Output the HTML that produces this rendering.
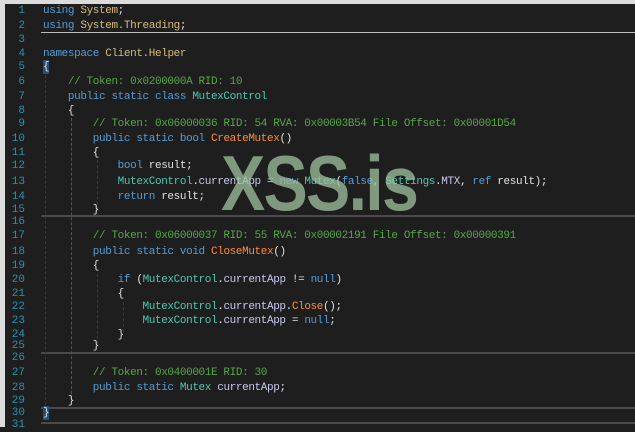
<!DOCTYPE html><html><head><style>
body{margin:0;width:635px;height:427px;overflow:hidden;background:#1e1e1e;position:relative;font-family:"Liberation Mono",monospace;font-size:11px;letter-spacing:-0.38px}
.l{position:absolute;left:0;height:14px;line-height:14px;white-space:pre;color:#e0e0e0}
.n{position:absolute;left:0;width:25px;text-align:right;color:#2b91af;letter-spacing:0}
.c{position:absolute;left:43px}
.k{color:#569cd6}.t{color:#4ec9b0}.y{color:#d7ba7d}.m{color:#ff8b3d}.g{color:#57a64a}.f{color:#c8c8f0}
.sep{position:absolute;left:41px;right:0;height:2px;background:#4a4a4a}
.wm{position:absolute;left:221px;top:138px;font-family:"Liberation Sans",sans-serif;font-weight:bold;font-size:78px;color:rgba(160,195,160,0.75);letter-spacing:-2px;transform:scaleX(0.85);transform-origin:left top}
.ig{position:absolute;border-left:1px dashed #3a3a3a;width:0}
</style></head><body>
<div style="position:absolute;left:0;top:0;width:635px;height:4px;background:#dcdcdc"></div>
<div style="position:absolute;left:0;top:0;width:5px;height:427px;background:#dcdcdc"></div>
<div class="sep" style="top:32px;height:1px;background:#bbb"></div>
<div class="sep" style="top:215px"></div>
<div class="sep" style="top:352px"></div>
<div style="position:absolute;left:41px;right:0;top:407px;height:13px;border-top:2px solid #4a4a4a;border-bottom:2px solid #4a4a4a"></div>
<div class="ig" style="left:45px;top:75px;height:330px"></div>
<div class="ig" style="left:71px;top:118px;height:276px;border-color:#2e6a4a"></div>
<div class="ig" style="left:97px;top:160px;height:50px"></div>
<div class="ig" style="left:97px;top:274px;height:70px"></div>
<div class="ig" style="left:123px;top:302px;height:30px"></div>
<div class="l" style="top:4px"><span class="n">1</span><span class="c"><span class="k">using</span> <span class="y">System</span>;</span></div>
<div class="l" style="top:19px"><span class="n">2</span><span class="c"><span class="k">using</span> <span class="y">System.Threading</span>;</span></div>
<div class="l" style="top:33px"><span class="n">3</span></div>
<div class="l" style="top:47px"><span class="n">4</span><span class="c"><span class="k">namespace</span> <span class="y">Client.Helper</span></span></div>
<div class="l" style="top:60px"><span class="n">5</span><span class="c" style="background:#264f78">{</span></div>
<div class="l" style="top:75px"><span class="n">6</span><span class="c">    <span class="g">// Token: 0x0200000A RID: 10</span></span></div>
<div class="l" style="top:90px"><span class="n">7</span><span class="c">    <span class="k">public static class</span> <span class="t">MutexControl</span></span></div>
<div class="l" style="top:104px"><span class="n">8</span><span class="c">    {</span></div>
<div class="l" style="top:117px"><span class="n">9</span><span class="c">        <span class="g">// Token: 0x06000036 RID: 54 RVA: 0x00003B54 File Offset: 0x00001D54</span></span></div>
<div class="l" style="top:132px"><span class="n">10</span><span class="c">        <span class="k">public static bool</span> <span class="m">CreateMutex</span>()</span></div>
<div class="l" style="top:146px"><span class="n">11</span><span class="c">        {</span></div>
<div class="l" style="top:159px"><span class="n">12</span><span class="c">            <span class="k">bool</span> result;</span></div>
<div class="l" style="top:175px"><span class="n">13</span><span class="c">            <span class="t">MutexControl</span>.<span class="f">currentApp</span> = <span class="k">new</span> <span class="t">Mutex</span>(<span class="k">false</span>, <span class="t">Settings</span>.<span class="f">MTX</span>, <span class="k">ref</span> result);</span></div>
<div class="l" style="top:190px"><span class="n">14</span><span class="c">            <span class="k">return</span> result;</span></div>
<div class="l" style="top:203px"><span class="n">15</span><span class="c">        }</span></div>
<div class="l" style="top:215px"><span class="n">16</span></div>
<div class="l" style="top:229px"><span class="n">17</span><span class="c">        <span class="g">// Token: 0x06000037 RID: 55 RVA: 0x00002191 File Offset: 0x00000391</span></span></div>
<div class="l" style="top:245px"><span class="n">18</span><span class="c">        <span class="k">public static void</span> <span class="m">CloseMutex</span>()</span></div>
<div class="l" style="top:259px"><span class="n">19</span><span class="c">        {</span></div>
<div class="l" style="top:273px"><span class="n">20</span><span class="c">            <span class="k">if</span> (<span class="t">MutexControl</span>.<span class="f">currentApp</span> != <span class="k">null</span>)</span></div>
<div class="l" style="top:287px"><span class="n">21</span><span class="c">            {</span></div>
<div class="l" style="top:300px"><span class="n">22</span><span class="c">                <span class="t">MutexControl</span>.<span class="f">currentApp</span>.<span class="m">Close</span>();</span></div>
<div class="l" style="top:314px"><span class="n">23</span><span class="c">                <span class="t">MutexControl</span>.<span class="f">currentApp</span> = <span class="k">null</span>;</span></div>
<div class="l" style="top:328px"><span class="n">24</span><span class="c">            }</span></div>
<div class="l" style="top:339px"><span class="n">25</span><span class="c">        }</span></div>
<div class="l" style="top:351px"><span class="n">26</span></div>
<div class="l" style="top:366px"><span class="n">27</span><span class="c">        <span class="g">// Token: 0x0400001E RID: 30</span></span></div>
<div class="l" style="top:381px"><span class="n">28</span><span class="c">        <span class="k">public static</span> <span class="t">Mutex</span> <span class="f">currentApp</span>;</span></div>
<div class="l" style="top:394px"><span class="n">29</span><span class="c">    }</span></div>
<div class="l" style="top:406px"><span class="n">30</span><span class="c" style="background:#264f78">}</span></div>
<div class="l" style="top:418px"><span class="n">31</span></div>
<div class="wm">XSS.is</div>
</body></html>
